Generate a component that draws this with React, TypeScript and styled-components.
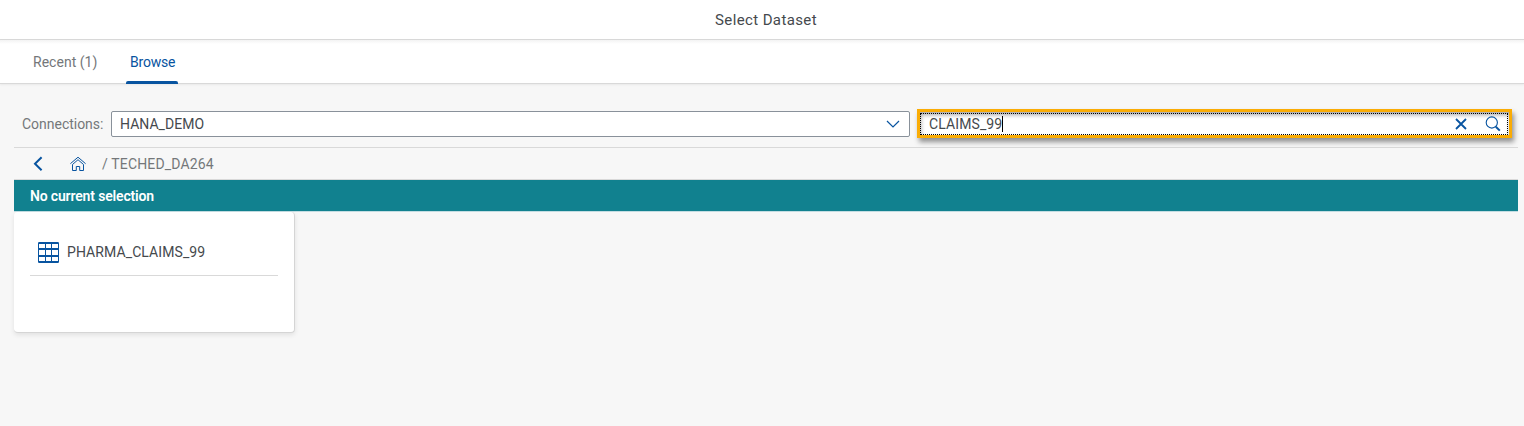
import React from "react";
import styled, { createGlobalStyle } from "styled-components";

const GlobalStyle = createGlobalStyle`
  * { box-sizing: border-box; }
  body {
    margin: 0;
    background: #f7f7f7;
    font-family: Roboto, "Liberation Sans", sans-serif;
    font-size: 14px;
    font-weight: 400;
    color: #45494d;
  }
`;

const Dialog = styled.main`
  display: flex;
  flex-direction: column;
  height: 426px;
  background: #f7f7f7;
  overflow: hidden;
`;

const Header = styled.header`
  display: flex;
  align-items: center;
  justify-content: center;
  height: 40px;
  flex: none;
  padding-left: 8px;
  background: #fff;
  border-bottom: 1px solid #d9d9d9;
`;

const Label = styled.span<{ $spacing?: number }>`
  white-space: pre;
  letter-spacing: ${(p) => p.$spacing ?? 0}px;
`;

const Title = styled(Label).attrs({ as: "h1" })`
  margin: 0;
  font-size: 15px;
  font-weight: 400;
  line-height: 20px;
`;

const Tabs = styled.nav`
  display: flex;
  height: 44px;
  flex: none;
  padding-left: 29px;
  gap: 25px;
  background: linear-gradient(#f3f3f3, #fff 4px);
  border-bottom: 1px solid #d9d9d9;
  box-shadow: 0 1px 2px rgba(0, 0, 0, 0.06);
`;

const Tab = styled.button<{ $active?: boolean; $width: number }>`
  display: flex;
  align-items: center;
  position: relative;
  width: ${(p) => p.$width}px;
  height: 44px;
  padding: 0 4px;
  border: 0;
  background: none;
  font: inherit;
  color: ${(p) => (p.$active ? "#0854a0" : "#74777a")};

  &::after {
    content: "";
    display: ${(p) => (p.$active ? "block" : "none")};
    position: absolute;
    left: 0;
    right: 0;
    bottom: 0;
    height: 3px;
    border-radius: 2px 2px 0 0;
    background: #0854a0;
  }
`;

const Content = styled.section`
  display: flex;
  flex-direction: column;
  padding: 25px 6px 0 14px;
`;

const Filters = styled.div`
  display: flex;
  height: 39px;
  padding: 0 6px 0 8px;
  border-bottom: 1px solid #d9d9d9;
`;

const FieldLabel = styled.label`
  width: 89px;
  flex: none;
  padding-top: 2px;
  line-height: 27px;
  color: #74777a;
`;

const Select = styled.div`
  display: flex;
  align-items: center;
  justify-content: space-between;
  width: 799px;
  height: 26px;
  flex: none;
  margin: 2px 7px 0 0;
  padding: 0 9px 0 8px;
  background: #fff;
  border: 1px solid #89919a;
  border-radius: 2px;
`;

const SearchHighlight = styled.div`
  flex: 1;
  height: 29px;
  border: 3px solid #faac05;
  background: #fff;
  box-shadow: 2px 4px 5px rgba(0, 0, 0, 0.42), inset 1px 3px 4px rgba(0, 0, 0, 0.35);
`;

const SearchField = styled.div`
  display: flex;
  align-items: center;
  height: 22px;
  margin: 1px 1px 0 0;
  padding: 0 6px 0 8px;
  border: 1px dotted #000;
`;

const Caret = styled.i`
  width: 1px;
  height: 16px;
  background: #000;
`;

const SearchActions = styled.div`
  display: flex;
  align-items: center;
  gap: 18px;
  margin-left: auto;
`;

const Breadcrumbs = styled.div`
  display: flex;
  align-items: center;
  height: 32px;
  padding: 1px 0 0 16px;
  color: #74777a;
  border-bottom: 1px solid #d9d9d9;
`;

const HomeIcon = styled.svg`
  margin: 0 16px 0 24px;
`;

const Crumb = styled(Label)`
  margin-left: 3.5px;
`;

const SelectionBar = styled.div`
  height: 32px;
  padding-left: 16px;
  line-height: 33px;
  background: #11818f;
  border-bottom: 1px solid #c3dde2;
  color: #fff;
  font-weight: 600;
`;

const Card = styled.article`
  width: 281px;
  height: 121px;
  padding: 16px;
  background: #fff;
  border: solid #d5d5d5;
  border-width: 0 1px 1px 0;
  border-radius: 4px;
  box-shadow: 0 2px 5px rgba(0, 0, 0, 0.09);
`;

const DatasetRow = styled.div`
  display: flex;
  align-items: center;
  gap: 8px;
  width: 248px;
  height: 48px;
  padding: 1px 0 0 8px;
  border-bottom: 1px solid #d9d9d9;
`;

export default function App() {
  return (
    <>
      <GlobalStyle />
      <Dialog>
        <Header>
          <Title $spacing={0.38}>Select Dataset</Title>
        </Header>
        <Tabs>
          <Tab $width={72}><Label $spacing={0.02}>Recent (1)</Label></Tab>
          <Tab $width={52} $active><Label $spacing={-0.2}>Browse</Label></Tab>
        </Tabs>
        <Content>
          <Filters>
            <FieldLabel><Label $spacing={-0.02}>Connections:</Label></FieldLabel>
            <Select>
              <Label $spacing={0.03}>HANA_DEMO</Label>
              <svg width="14" height="8" viewBox="0 0 14 8" fill="none" stroke="#0854a0" strokeWidth="1.2">
                <path d="M1 1l6 6 6-6" />
              </svg>
            </Select>
            <SearchHighlight>
              <SearchField>
                <Label $spacing={0.11}>CLAIMS_99</Label>
                <Caret />
                <SearchActions>
                  <svg width="12" height="12" viewBox="0 0 12 12" fill="none" stroke="#0854a0" strokeWidth="1.8">
                    <path d="M1 1l10 10M11 1L1 11" />
                  </svg>
                  <svg width="16" height="16" viewBox="0 0 16 16" fill="none" stroke="#0854a0">
                    <circle cx="6.8" cy="6.5" r="5.6" strokeWidth="1.1" />
                    <path d="M10.8 10.8l4 3.8" strokeWidth="2" />
                  </svg>
                </SearchActions>
              </SearchField>
            </SearchHighlight>
          </Filters>
          <Breadcrumbs>
            <svg width="16" height="16" viewBox="0 0 16 16" fill="none" stroke="#0854a0" strokeWidth="2">
              <path d="M11.6 1.2L5 7.8l6.6 6.5" />
            </svg>
            <HomeIcon width="16" height="16" viewBox="0 0 16 16" fill="none" stroke="#0854a0">
              <path d="M.4 7.7L8 1.2l7.6 6.5M2.5 8.5v6h3.8v-4h3.4v4h3.8v-6L8 3.7z" />
            </HomeIcon>
            <Label>/</Label>
            <Crumb $spacing={0.16}>TECHED_DA264</Crumb>
          </Breadcrumbs>
          <SelectionBar><Label $spacing={-0.16}>No current selection</Label></SelectionBar>
          <Card>
            <DatasetRow>
              <svg width="21" height="21" viewBox="0 0 21 21">
                <rect width="21" height="21" rx="1.2" fill="#0854a0" />
                <path
                  fill="#fff"
                  d="M1 2h6v4H1zM8 2h5v4H8zM14 2h6v4h-6zM1 8h6v5H1zM8 8h5v5H8zM14 8h6v5h-6zM1 15h6v4H1zM8 15h5v4H8zM14 15h6v4h-6z"
                />
              </svg>
              <Label $spacing={0.09}>PHARMA_CLAIMS_99</Label>
            </DatasetRow>
          </Card>
        </Content>
      </Dialog>
    </>
  );
}
